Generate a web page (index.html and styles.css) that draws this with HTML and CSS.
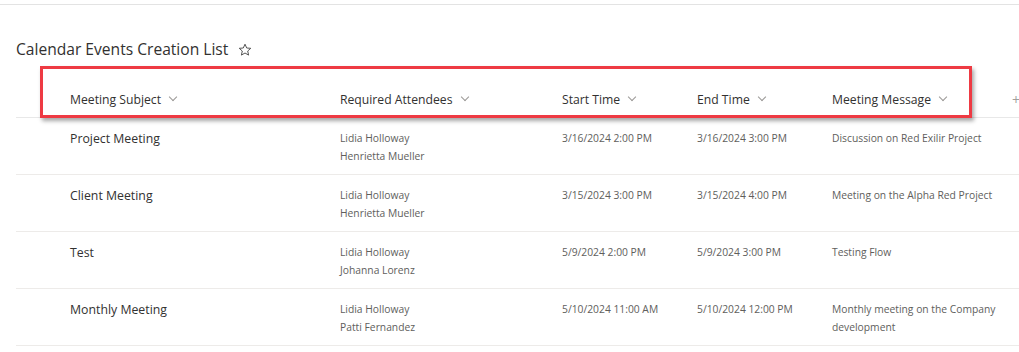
FILE: index.html
```html
<!DOCTYPE html>
<html lang="en">
<head>
<meta charset="utf-8">
<title>Calendar Events Creation List</title>
<link rel="stylesheet" href="styles.css">
</head>
<body>
<div class="page">
  <div class="topbar"></div>
  <div class="titlebar">
    <h1 class="title">Calendar Events Creation List</h1>
    <svg class="star" width="14" height="14" viewBox="0 0 14 14"><path d="M7 1.2 L8.7 5 L12.8 5.3 L9.7 8 L10.6 12.1 L7 10 L3.4 12.1 L4.3 8 L1.2 5.3 L5.3 5 Z" fill="none" stroke="#555" stroke-width="1" stroke-linejoin="round"/></svg>
  </div>
  <div class="list">
    <div class="row header">
      <div class="cell check"></div>
      <div class="cell hcell">Meeting Subject <span class="chev"></span></div>
      <div class="cell hcell">Required Attendees <span class="chev"></span></div>
      <div class="cell hcell">Start Time <span class="chev"></span></div>
      <div class="cell hcell">End Time <span class="chev"></span></div>
      <div class="cell hcell">Meeting Message <span class="chev"></span></div>
      <div class="cell hcell add">+</div>
      <div class="highlight"></div>
    </div>

    <div class="row item">
      <div class="cell check"></div>
      <div class="cell subject">Project Meeting</div>
      <div class="cell small"><div>Lidia Holloway</div><div>Henrietta Mueller</div></div>
      <div class="cell small">3/16/2024 2:00 PM</div>
      <div class="cell small">3/16/2024 3:00 PM</div>
      <div class="cell small">Discussion on Red Exilir Project</div>
    </div>

    <div class="row item">
      <div class="cell check"></div>
      <div class="cell subject">Client Meeting</div>
      <div class="cell small"><div>Lidia Holloway</div><div>Henrietta Mueller</div></div>
      <div class="cell small">3/15/2024 3:00 PM</div>
      <div class="cell small">3/15/2024 4:00 PM</div>
      <div class="cell small">Meeting on the Alpha Red Project</div>
    </div>

    <div class="row item">
      <div class="cell check"></div>
      <div class="cell subject">Test</div>
      <div class="cell small"><div>Lidia Holloway</div><div>Johanna Lorenz</div></div>
      <div class="cell small">5/9/2024 2:00 PM</div>
      <div class="cell small">5/9/2024 3:00 PM</div>
      <div class="cell small">Testing Flow</div>
    </div>

    <div class="row item">
      <div class="cell check"></div>
      <div class="cell subject">Monthly Meeting</div>
      <div class="cell small"><div>Lidia Holloway</div><div>Patti Fernandez</div></div>
      <div class="cell small">5/10/2024 11:00 AM</div>
      <div class="cell small">5/10/2024 12:00 PM</div>
      <div class="cell small">Monthly meeting on the Company development</div>
    </div>
  </div>
</div>
</body>
</html>
```

FILE: styles.css
```css
* { box-sizing: border-box; }

html, body {
  margin: 0;
  padding: 0;
  background: #ffffff;
  overflow: hidden;
}

body {
  font-family: "Open Sans", "Noto Sans", "Liberation Sans", sans-serif;
  color: #323130;
}

.page {
  width: 1019px;
  height: 352px;
  position: relative;
}

.topbar {
  height: 5px;
  border-bottom: 1px solid #e3e3e3;
}

.titlebar {
  display: flex;
  align-items: center;
  gap: 10px;
  padding: 30px 0 0 16px;
  height: 58px;
}

.title {
  margin: 0;
  font-size: 15.6px;
  font-weight: 400;
  color: #323130;
}

.star { display: block; margin-top: 1px; }

.list {
  margin-left: 16px;
}

.row {
  display: grid;
  grid-template-columns: 54px 270px 222px 135px 135px 172px 1fr;
  border-bottom: 1px solid #edebe9;
}

.header {
  position: relative;
  height: 55px;
  align-items: center;
  padding-top: 18px;
  border-bottom-color: #e8e8e8;
}

.hcell {
  font-size: 12.2px;
  color: #323130;
  white-space: nowrap;
  display: flex;
  align-items: center;
  gap: 6px;
}

.chev {
  display: inline-block;
  width: 6px;
  height: 6px;
  border-right: 1px solid #9a9896;
  border-bottom: 1px solid #9a9896;
  transform: rotate(45deg);
  margin-top: -4px;
  margin-left: 3px;
}

.add {
  color: #a19f9d;
  font-size: 14px;
  padding-left: 8px;
}

.highlight {
  position: absolute;
  left: 24px;
  top: 3px;
  width: 932px;
  height: 52px;
  border: 3px solid #ee3a43;
  box-shadow: 2px 3px 4px rgba(0, 0, 0, 0.35);
  pointer-events: none;
}

.item {
  height: 57px;
  padding-top: 11px;
  align-items: start;
}

.subject {
  font-size: 12.3px;
  color: #323130;
  line-height: 20px;
}

.small {
  font-size: 10.3px;
  color: #605e5c;
  line-height: 18px;
}
```
